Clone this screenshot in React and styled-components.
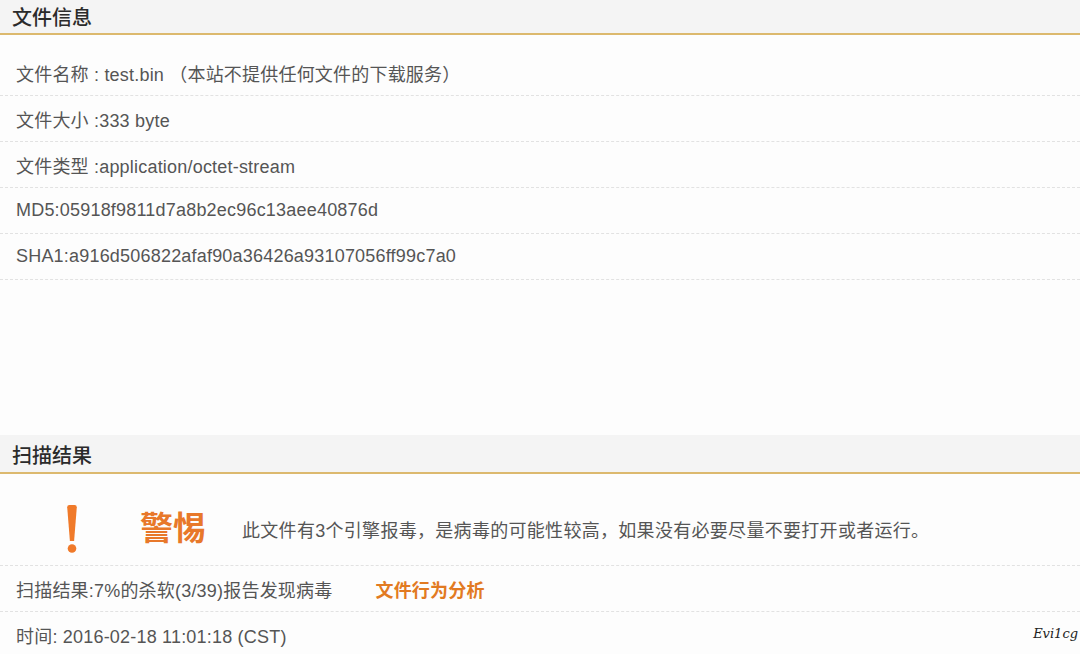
import React from "react";
import styled, { createGlobalStyle } from "styled-components";

const GlobalStyle = createGlobalStyle`
  html, body {
    margin: 0;
    padding: 0;
    background: #fdfdfd;
  }
  body {
    font-family: "Liberation Sans", "Noto Sans CJK SC", sans-serif;
    color: #555;
  }
`;

const Page = styled.div`
  width: 1080px;
  height: 654px;
  overflow: hidden;
  background: #fdfdfd;
`;

const Panel = styled.section`
  display: flex;
  flex-direction: column;
  padding-bottom: ${(p) => p.$bottom || 0}px;
`;

const PanelHeader = styled.h2`
  margin: 0;
  height: ${(p) => p.$h}px;
  display: flex;
  align-items: center;
  padding: 0 12px;
  padding-top: ${(p) => p.$pt || 0}px;
  box-sizing: border-box;
  background: #f4f4f4;
  border-bottom: 2px solid #dcb96e;
  font-size: 20px;
  font-weight: 500;
  color: #2b2b2b;
`;

const InfoList = styled.div`
  display: flex;
  flex-direction: column;
  padding-top: 15px;
`;

const Row = styled.div`
  height: 46px;
  box-sizing: border-box;
  display: flex;
  align-items: center;
  justify-content: space-between;
  padding: 0 2px 0 16px;
  border-bottom: ${(p) => (p.$last ? "none" : "1px dashed #e2e2e2")};
  font-size: 18px;
  letter-spacing: 0.2px;
  color: #555;
  white-space: nowrap;
`;

const RowText = styled.span`
  display: flex;
  align-items: center;
`;

const Link = styled.a`
  margin-left: 43px;
  color: #e27a22;
  font-weight: bold;
  text-decoration: none;
  cursor: pointer;
`;

const Warning = styled.div`
  display: flex;
  align-items: center;
  height: 92px;
  box-sizing: border-box;
  padding-top: 30px;
  padding-bottom: 11px;
  border-bottom: 1px dashed #e2e2e2;
`;

const IconCell = styled.div`
  width: 140px;
  padding-left: 4px;
  box-sizing: border-box;
  display: flex;
  justify-content: center;
  align-items: center;
  height: 50px;
`;

const Level = styled.div`
  font-size: 33px;
  font-weight: bold;
  color: #e8782a;
  line-height: 50px;
  width: 102px;
  white-space: nowrap;
`;

const Message = styled.div`
  font-size: 18px;
  letter-spacing: 0.3px;
  color: #555;
  white-space: nowrap;
`;

const Watermark = styled.span`
  font-family: "DejaVu Serif", "Liberation Serif", serif;
  font-style: italic;
  font-size: 13px;
  letter-spacing: 0;
  color: #222;
  margin-top: -4px;
`;

const Bang = () => (
  <svg width="12" height="48" viewBox="0 0 12 48" aria-hidden="true">
    <path d="M1.2 2.2 Q1.2 0 3.4 0 L8.6 0 Q10.8 0 10.8 2.2 L8.1 36 L3.9 36 Z" fill="#f07a2a" />
    <circle cx="6" cy="43.5" r="4.3" fill="#f07a2a" />
  </svg>
);

const info = [
  "文件名称 : test.bin （本站不提供任何文件的下载服务）",
  "文件大小 :333 byte",
  "文件类型 :application/octet-stream",
  "MD5:05918f9811d7a8b2ec96c13aee40876d",
  "SHA1:a916d506822afaf90a36426a93107056ff99c7a0",
];

export default function App() {
  return (
    <Page>
      <GlobalStyle />
      <Panel $bottom={155}>
        <PanelHeader $h={35}>文件信息</PanelHeader>
        <InfoList>
          {info.map((t) => (
            <Row key={t}>
              <RowText>{t}</RowText>
            </Row>
          ))}
        </InfoList>
      </Panel>
      <Panel>
        <PanelHeader $h={39} $pt={2}>扫描结果</PanelHeader>
        <Warning>
          <IconCell>
            <Bang />
          </IconCell>
          <Level>警惕</Level>
          <Message>此文件有3个引擎报毒，是病毒的可能性较高，如果没有必要尽量不要打开或者运行。</Message>
        </Warning>
        <Row>
          <RowText>
            扫描结果:7%的杀软(3/39)报告发现病毒
            <Link>文件行为分析</Link>
          </RowText>
        </Row>
        <Row $last>
          <RowText>时间: 2016-02-18 11:01:18 (CST)</RowText>
          <Watermark>Evi1cg</Watermark>
        </Row>
      </Panel>
    </Page>
  );
}
